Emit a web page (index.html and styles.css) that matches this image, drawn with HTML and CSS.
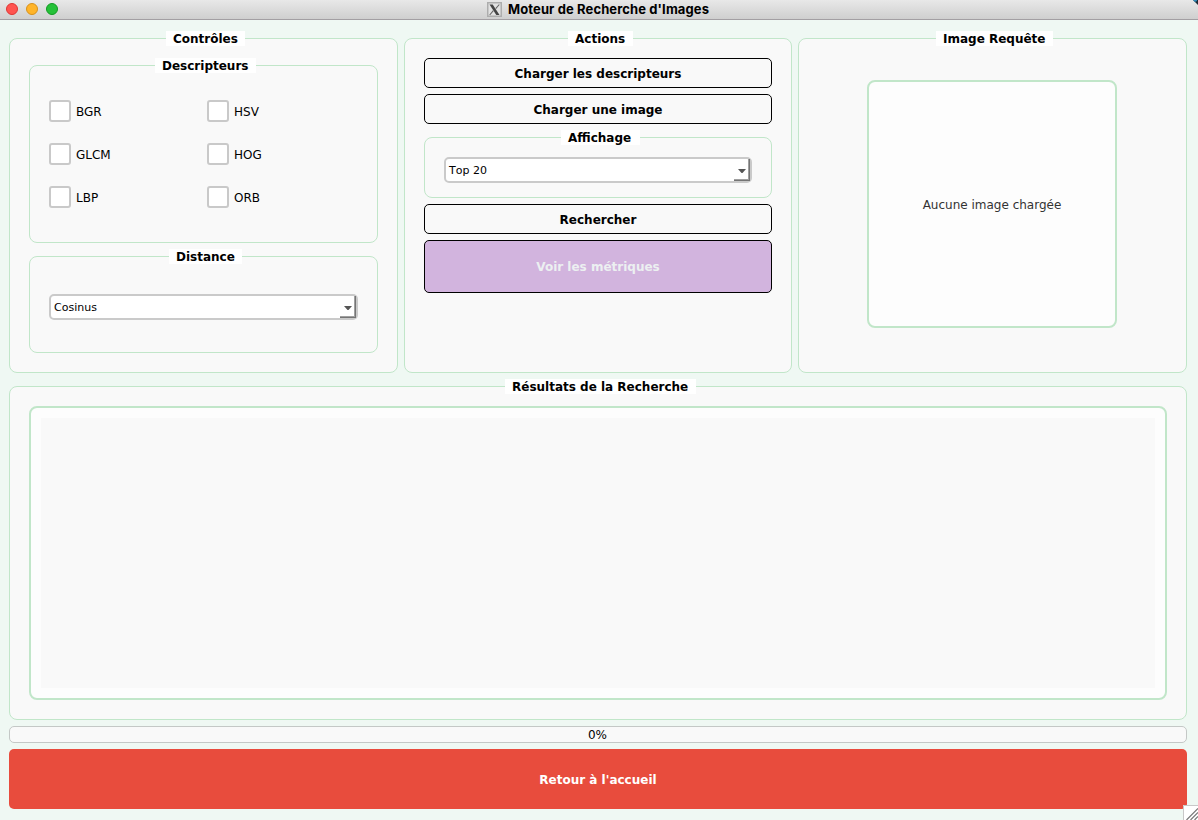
FILE: index.html
```html
<!DOCTYPE html>
<html lang="fr">
<head>
<meta charset="utf-8">
<title>Moteur de Recherche d'Images</title>
<link rel="stylesheet" href="styles.css">
</head>
<body>
<header class="titlebar">
  <div class="lights"><i class="light close"></i><i class="light minimize"></i><i class="light maximize"></i></div>
  <svg class="app-icon" width="15" height="15" viewBox="0 0 15 15"><rect x=".75" y=".75" width="13.500" height="13.500" fill="#e2e2e2" stroke="#adadad" stroke-width="1.500"/><path d="M2.500 2.500h3.200l6.800 10.500H9.300z" fill="#444"/><path d="M12.300 2.500 8.700 6.700M6.300 8.700 2.700 13" stroke="#666" stroke-width="1.100"/></svg>
  <h1 class="window-title">Moteur de Recherche d'Images</h1>
  <svg class="corner" width="5" height="5" viewBox="0 0 5 5"><path d="M0 0h5v5L3 3z" fill="#1c2a35"/><path d="M0 0h4v1L2 2z" fill="#2e86b5"/></svg>
</header>
<main class="window">
  <div class="top-row">
    <section class="group controls">
      <h2 class="group-title title-controls">Contrôles</h2>
      <section class="group descriptors">
        <h2 class="group-title title-descriptors">Descripteurs</h2>
        <label class="check"><span class="box"></span><span class="check-text">BGR</span></label>
        <label class="check"><span class="box"></span><span class="check-text">HSV</span></label>
        <label class="check"><span class="box"></span><span class="check-text">GLCM</span></label>
        <label class="check"><span class="box"></span><span class="check-text">HOG</span></label>
        <label class="check"><span class="box"></span><span class="check-text">LBP</span></label>
        <label class="check"><span class="box"></span><span class="check-text">ORB</span></label>
      </section>
      <section class="group distance">
        <h2 class="group-title title-distance">Distance</h2>
        <div class="combo"><span>Cosinus</span><span class="drop"><svg width="8" height="4" viewBox="0 0 8 4"><path d="M0 0h8L4.500 4h-1z" fill="#555"/></svg></span></div>
      </section>
    </section>
    <section class="group actions">
      <h2 class="group-title title-actions">Actions</h2>
      <button class="btn">Charger les descripteurs</button>
      <button class="btn">Charger une image</button>
      <section class="group display">
        <h2 class="group-title title-display">Affichage</h2>
        <div class="combo"><span>Top 20</span><span class="drop"><svg width="8" height="4" viewBox="0 0 8 4"><path d="M0 0h8L4.500 4h-1z" fill="#555"/></svg></span></div>
      </section>
      <button class="btn">Rechercher</button>
      <button class="btn metrics" disabled>Voir les métriques</button>
    </section>
    <section class="group query">
      <h2 class="group-title title-query">Image Requête</h2>
      <div class="preview">Aucune image chargée</div>
    </section>
  </div>
  <section class="group results">
    <h2 class="group-title title-results">Résultats de la Recherche</h2>
    <div class="scroll"><div class="viewport"></div></div>
  </section>
  <div class="progress">0%</div>
  <button class="home">Retour à l'accueil</button>
</main>
<svg class="grip" width="15" height="15" viewBox="0 0 15 15"><path d="M0 0h15v15H0z" fill="#fff"/><path d="M.5 15V.5H15" fill="none" stroke="#c8c8c8"/><path d="M3.500 15 15 3.500M7.500 15 15 7.500M11.500 15l3.500-3.500" stroke="#777" stroke-width="1.200"/></svg>
</body>
</html>
```

FILE: styles.css
```css
* { box-sizing: border-box; }
body {
  margin: 0;
  width: 1198px;
  height: 820px;
  overflow: hidden;
  background: #eff8f3;
  color: #000;
  font: 12px/15px "DejaVu Sans", sans-serif;
}
button { font: bold 12px/15px "DejaVu Sans", sans-serif; padding: 2px 0 0; }

.titlebar {
  position: relative;
  height: 20px;
  display: flex;
  align-items: flex-start;
  background: linear-gradient(#e8e8e8, #cfcfcf);
  border-bottom: 1px solid #a39fa3;
}
.lights { display: flex; gap: 8px; padding: 3px 0 0 6px; width: 487px; }
.light { width: 12px; height: 12px; border-radius: 50%; border: 1px solid; }
.close { background: #ff5350; border-color: #df3533; }
.minimize { background: #ffb429; border-color: #d8911b; }
.maximize { background: #25c138; border-color: #129a22; }
.app-icon { margin-top: 2px; }
.window-title {
  margin: 1px 0 0 6px;
  font: bold 13px/16px Inter, sans-serif;
  letter-spacing: .11px;
  white-space: nowrap;
}
.corner { position: absolute; right: 0; top: 0; }

.window { display: flex; flex-direction: column; padding: 18px 11px 0 9px; }
.top-row { display: grid; grid-template-columns: 389px 388px 389px; gap: 6px; height: 335px; }
.group {
  position: relative;
  border: 1px solid #c1e6c9;
  border-radius: 8px;
  background: #f9f9f9;
}
/* Titles sit over the top border of their group. */
.group-title {
  position: absolute;
  top: -8px;
  height: 15px;
  margin: 0;
  padding-left: 7px;
  background: #fff;
  font: bold 12px/17px "DejaVu Sans", sans-serif;
  white-space: nowrap;
}
.title-controls { left: 156px; width: 79px; }
.title-descriptors { left: 125px; width: 101px; }
.title-distance { left: 139px; width: 73px; }
.title-actions { left: 163px; width: 65px; }
.title-display { left: 136px; width: 79px; }
.title-query { left: 137px; width: 117px; }
.title-results { left: 495px; width: 191px; }

.controls { display: flex; flex-direction: column; gap: 13px; padding: 26px 19px 19px; }
.descriptors {
  height: 178px;
  display: grid;
  grid-template-columns: 158px 1fr;
  grid-auto-rows: 22px;
  row-gap: 21px;
  padding: 34px 19px 0;
}
.check { display: flex; align-items: center; gap: 5px; }
.check-text { padding-top: 2px; }
.box { width: 22px; height: 22px; border: 2px solid #c9c9c9; border-radius: 3px; background: #fff; }
.distance { height: 97px; padding: 37px 19px 0; }
.combo {
  height: 26px;
  display: flex;
  justify-content: space-between;
  border: 2px solid #cacaca;
  border-radius: 5px;
  background: #fff;
  padding-left: 3px;
  font-size: 11px;
  line-height: 24px;
  font-kerning: none;
}
.drop {
  width: 16px;
  height: 22px;
  display: flex;
  align-items: center;
  padding: 2px 0 0 4px;
  border-right: 1px solid #757575;
  border-bottom: 1px solid #757575;
  box-shadow: inset -1px -1px #a0a0a0;
}

.actions { display: flex; flex-direction: column; gap: 6px; padding: 19px 19px 0; }
.btn { height: 30px; border: 1px solid #000; border-radius: 5px; background: #f9f9f9; color: #000; }
.metrics { height: 53px; background: #d2b4de; color: #ecf0f1; }
.display { height: 61px; margin-top: 7px; padding: 19px 19px 0; }

.query { padding: 41px 0 0 68px; }
.preview {
  width: 250px;
  height: 248px;
  display: flex;
  align-items: center;
  justify-content: center;
  padding-top: 2px;
  border: 2px solid #c1e6c9;
  border-radius: 8px;
  background: #fdfdfd;
  color: #333;
}

.results { height: 334px; margin-top: 13px; padding: 19px; }
.scroll { height: 294px; padding: 10px; border: 2px solid #c1e6c9; border-radius: 8px; background: #fdfdfd; }
.viewport { height: 270px; background: #f9f9f9; }

.progress {
  height: 17px;
  margin-top: 6px;
  padding-right: 1px;
  border: 1px solid #c4c8c6;
  border-radius: 5px;
  background: #f9f9f9;
  text-align: center;
  line-height: 16px;
}
.home { height: 60px; margin-top: 6px; border: 0; border-radius: 5px; background: #e84c3d; color: #fff; }
.grip { position: absolute; right: 0; bottom: 0; }
```
